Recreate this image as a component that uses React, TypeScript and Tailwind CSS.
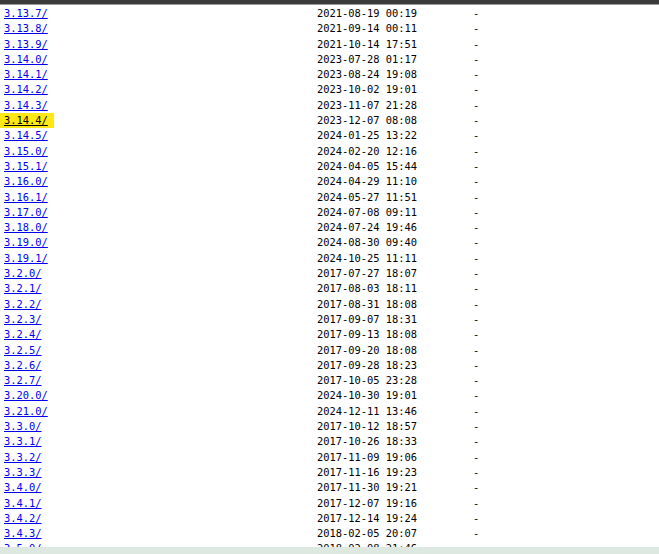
const rows: [string, string][] = [
  ["3.13.7/", "2021-08-19 00:19"],
  ["3.13.8/", "2021-09-14 00:11"],
  ["3.13.9/", "2021-10-14 17:51"],
  ["3.14.0/", "2023-07-28 01:17"],
  ["3.14.1/", "2023-08-24 19:08"],
  ["3.14.2/", "2023-10-02 19:01"],
  ["3.14.3/", "2023-11-07 21:28"],
  ["3.14.4/", "2023-12-07 08:08"],
  ["3.14.5/", "2024-01-25 13:22"],
  ["3.15.0/", "2024-02-20 12:16"],
  ["3.15.1/", "2024-04-05 15:44"],
  ["3.16.0/", "2024-04-29 11:10"],
  ["3.16.1/", "2024-05-27 11:51"],
  ["3.17.0/", "2024-07-08 09:11"],
  ["3.18.0/", "2024-07-24 19:46"],
  ["3.19.0/", "2024-08-30 09:40"],
  ["3.19.1/", "2024-10-25 11:11"],
  ["3.2.0/", "2017-07-27 18:07"],
  ["3.2.1/", "2017-08-03 18:11"],
  ["3.2.2/", "2017-08-31 18:08"],
  ["3.2.3/", "2017-09-07 18:31"],
  ["3.2.4/", "2017-09-13 18:08"],
  ["3.2.5/", "2017-09-20 18:08"],
  ["3.2.6/", "2017-09-28 18:23"],
  ["3.2.7/", "2017-10-05 23:28"],
  ["3.20.0/", "2024-10-30 19:01"],
  ["3.21.0/", "2024-12-11 13:46"],
  ["3.3.0/", "2017-10-12 18:57"],
  ["3.3.1/", "2017-10-26 18:33"],
  ["3.3.2/", "2017-11-09 19:06"],
  ["3.3.3/", "2017-11-16 19:23"],
  ["3.4.0/", "2017-11-30 19:21"],
  ["3.4.1/", "2017-12-07 19:16"],
  ["3.4.2/", "2017-12-14 19:24"],
  ["3.4.3/", "2018-02-05 20:07"],
  ["3.5.0/", "2018-02-08 21:46"],
  ["3.5.1/", "2018-03-01 18:12"],
];

// the row the browser's find bar is sitting on
const FOUND = "3.14.4/";

export default function App() {
  return (
    <div className="flex h-screen w-full flex-col overflow-hidden bg-white">
      {/* browser chrome sliver */}
      <div className="h-[4px] shrink-0 bg-[#3b3b3b]" />
      <div className="h-px shrink-0 bg-[#9a9a9a]" />

      {/* autoindex listing */}
      <div className="min-h-0 flex-1 overflow-hidden pl-1 pt-[1px] font-['DejaVu_Sans_Mono',monospace] text-[10.4px] leading-[15.29px] text-black">
        {rows.map(([name, date]) => (
          <div key={name} className="grid grid-cols-[313px_156px_auto] whitespace-pre">
            <div>
              {name === FOUND ? (
                <a href="#" className="-ml-1 inline-block bg-[#ffe816] pl-1 pr-[6px] text-black underline">
                  {name}
                </a>
              ) : (
                <a href="#" className="text-[#0000ee] underline">
                  {name}
                </a>
              )}
            </div>
            <span>{date}</span>
            <span>-</span>
          </div>
        ))}
      </div>

      {/* status strip along the bottom */}
      <div className="h-[7px] shrink-0 bg-[#dde9e0]" />
    </div>
  );
}
